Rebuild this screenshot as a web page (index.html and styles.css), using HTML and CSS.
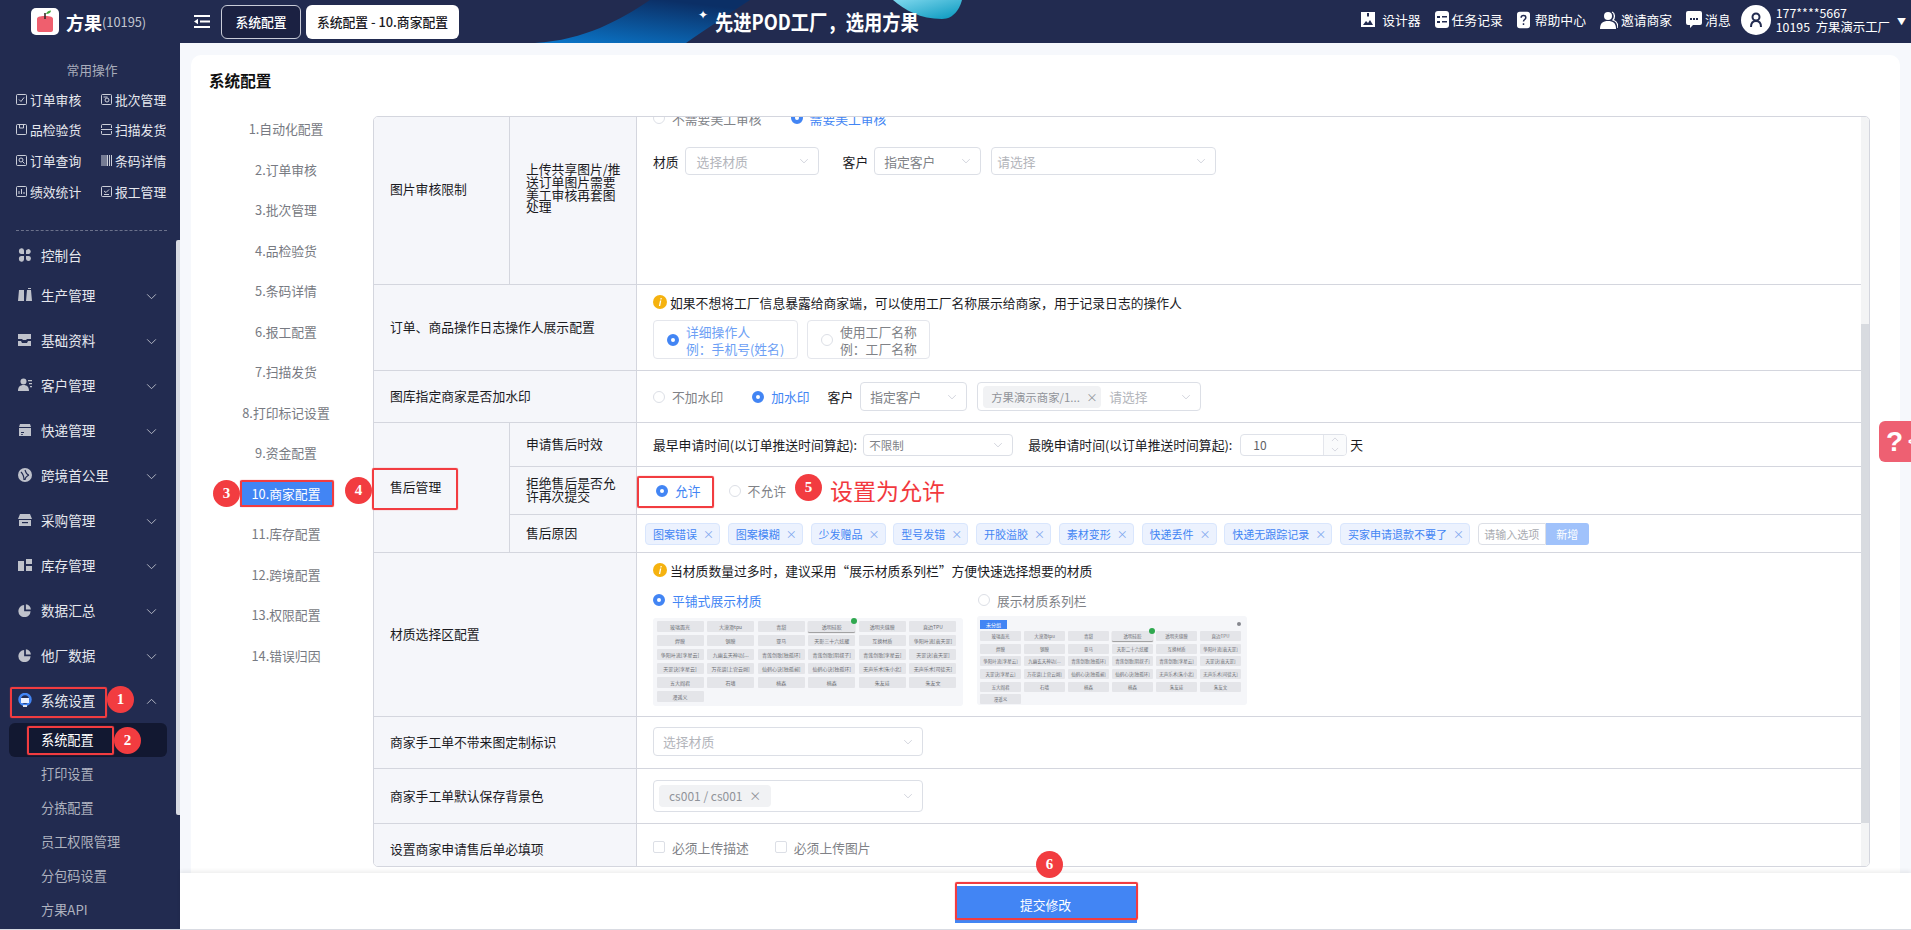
FILE: index.html
```html
<!DOCTYPE html>
<html lang="zh-CN">
<head>
<meta charset="utf-8">
<title>系统配置</title>
<link rel="stylesheet" href="styles.css">
</head>
<body>
<svg class="defs" width="0" height="0" aria-hidden="true">
  <symbol id="chev" viewBox="0 0 12 8"><path d="M1 1.5 6 6.5 11 1.5" fill="none" stroke="currentColor" stroke-width="1"/></symbol>
  <symbol id="warn" viewBox="0 0 14 14"><circle cx="7" cy="7" r="7" fill="#f5b20f"/><path d="M7.6 3h1.2l-.3 1.4H7.3zM7 5.6h1.3L7.2 11H5.9z" fill="#fff"/></symbol>
  <symbol id="pie" viewBox="0 0 16 16"><path d="M7 2.2v7.2h7.4A7 7 0 1 1 7 2.2z" fill="currentColor"/><path d="M9 1.5a6 6 0 0 1 5.7 6H9z" fill="currentColor"/></symbol>
</svg>
<header class="topbar">
  <div class="brand">
    <svg class="logo" viewBox="0 0 28 27"><rect width="28" height="27" rx="5" fill="#fff"/><path d="M6 11c0-2 2-3 8-3s8 1 8 3v11c0 1-1 2-2 2H8c-1 0-2-1-2-2z" fill="#ef5f6e"/><path d="M14 5v6" stroke="#3a2a2a" stroke-width="1.6"/><path d="M15 6c1-3 3-3.500 5-3.500 0 2-2 3.500-5 3.500z" fill="#42a83e"/></svg>
    <span class="brand-name">方果</span><span class="brand-id">(10195)</span>
  </div>
  <div class="topnav">
    <svg class="burger" viewBox="0 0 16 13"><path d="M0 1h16M6 6.500h10M0 12h16" stroke="#fff" stroke-width="2"/><path d="M4 3.800v5.400L0 6.500z" fill="#fff"/></svg>
    <div class="tab tab-dark">系统配置</div>
    <div class="tab tab-light">系统配置 - 10.商家配置</div>
  </div>
  <div class="banner">
    <svg class="banner-art" viewBox="0 0 500 43" preserveAspectRatio="none">
      <defs>
        <linearGradient id="sw" x1="0" y1="1" x2="0.6" y2="0"><stop offset="0" stop-color="#0a78cc"/><stop offset="1" stop-color="#0b2f66"/></linearGradient>
        <linearGradient id="cy" x1="0" y1="0" x2="1" y2="1"><stop offset="0" stop-color="#7fd8ee"/><stop offset="1" stop-color="#0596bd"/></linearGradient>
      </defs>
      <path d="M35 43C85 40 120 20 150 0H250C225 16 205 30 186 43z" fill="url(#sw)"/>
      <path d="M393 0C405 10 420 19 442 19 454 19 460 8 462 0z" fill="url(#cy)"/>
    </svg>
    <span class="star">✦</span><span class="slogan">先进POD工厂&#65292;选用方果</span>
  </div>
  <div class="tools">
    <div class="tool t1"><svg viewBox="0 0 14 15"><path d="M0 0h14v15H0z" fill="#fff"/><path d="M2 13l3-4 2 2 2-3 3 5zM6 1h2v4L7 4 6 5z" fill="#222b50"/></svg><span>设计器</span></div>
    <div class="tool t2"><svg viewBox="0 0 14 17"><rect width="14" height="17" rx="3" fill="#fff"/><path d="M2 5h3v2H2zM7 5h5v1.500H7zM2 10h3v2H2zM7 10h5v1.500H7z" fill="#222b50"/></svg><span>任务记录</span></div>
    <div class="tool t3"><svg viewBox="0 0 14 18"><rect width="14" height="18" rx="3" fill="#fff"/><path d="M4.500 6.500c0-3 5-3 5 0 0 2-2.500 2-2.500 4M7 12.500v2" fill="none" stroke="#222b50" stroke-width="1.600"/></svg><span>帮助中心</span></div>
    <div class="tool t4"><svg viewBox="0 0 18 18"><circle cx="8" cy="5" r="4" fill="#fff"/><path d="M0 18c0-6 3-8 8-8s8 2 8 8z" fill="#fff"/><path d="M12 1c3 1 3 6 1 8 3 1 5 4 5 8" fill="none" stroke="#fff" stroke-width="1.300"/></svg><span>邀请商家</span></div>
    <div class="tool t5"><svg viewBox="0 0 16 17"><path d="M2 0h12a2 2 0 0 1 2 2v10a2 2 0 0 1-2 2H7l-3 3v-3H2a2 2 0 0 1-2-2V2a2 2 0 0 1 2-2z" fill="#fff"/><path d="M4 7h2v2H4zM7 7h2v2H7zM10 7h2v2h-2z" fill="#222b50"/></svg><span>消息</span></div>
    <svg class="avatar" viewBox="0 0 30 30"><circle cx="15" cy="15" r="15" fill="#fff"/><circle cx="15" cy="12" r="3.500" fill="none" stroke="#222b50" stroke-width="2"/><path d="M10 22c0-4 2-6 5-6s5 2 5 6" fill="none" stroke="#222b50" stroke-width="2"/></svg>
    <div class="user"><div>177****5667</div><div>10195&nbsp; 方果演示工厂</div></div>
    <span class="caret">▼</span>
  </div>
</header>

<div class="shell">
  <aside class="sidebar">
    <div class="quick-title">常用操作</div>
    <div class="quick">
      <div class="qk"><svg viewBox="0 0 11 11"><rect x=".5" y=".5" width="10" height="10" rx="1"/><path d="M3 5.500l2 2 3-4"/></svg>订单审核</div>
      <div class="qk"><svg viewBox="0 0 11 11"><rect x=".5" y=".5" width="10" height="10" rx="1"/><circle cx="6" cy="6" r="2"/><path d="M2.500 3h4"/></svg>批次管理</div>
      <div class="qk"><svg viewBox="0 0 11 11"><rect x=".5" y=".5" width="10" height="10" rx="1"/><path d="M3.500 1v3h4V1"/></svg>品检验货</div>
      <div class="qk"><svg viewBox="0 0 11 11"><path d="M.5 4V1.500a1 1 0 0 1 1-1h8a1 1 0 0 1 1 1V4M.5 7v2.500a1 1 0 0 0 1 1h8a1 1 0 0 0 1-1V7M0 5.500h11"/></svg>扫描发货</div>
      <div class="qk"><svg viewBox="0 0 11 11"><rect x=".5" y=".5" width="10" height="10" rx="1"/><circle cx="5" cy="5" r="2"/><path d="M6.500 6.500l2 2"/></svg>订单查询</div>
      <div class="qk"><svg viewBox="0 0 11 11"><path d="M1 0v11M3 0v11M5 0v11M6.500 0v11M8.500 0v11M10.500 0v11"/></svg>条码详情</div>
      <div class="qk"><svg viewBox="0 0 11 11"><rect x=".5" y=".5" width="10" height="10" rx="1"/><path d="M3 8V5M5.500 8V3M8 8V6"/></svg>绩效统计</div>
      <div class="qk"><svg viewBox="0 0 11 11"><rect x=".5" y=".5" width="10" height="10" rx="1"/><path d="M3 5l2 1.500 3-3M3 8.500h5"/></svg>报工管理</div>
    </div>
    <div class="divider"></div>
    <nav class="menu">
      <div class="mi mi-first"><svg class="mic" viewBox="0 0 14 14"><path d="M1 3a2.500 2.500 0 0 1 5-.5V6H3A2.500 2.500 0 0 1 1 3zM8 2.500A2.500 2.500 0 1 1 11 6H8zM1 11a2.500 2.500 0 0 1 2-3h3v3.500A2.500 2.500 0 0 1 1 11zM8 8h3a2.500 2.500 0 1 1-3 3z" fill="currentColor"/></svg><span>控制台</span></div>
      <div class="mi"><svg class="mic" viewBox="0 0 14 14"><path d="M1 2h5v11H0zM8 13l1-11h4l1 11zM10 0h3v1h-3z" fill="currentColor"/></svg><span>生产管理</span><svg class="chev"><use href="#chev"/></svg></div>
      <div class="mi"><svg class="mic" viewBox="0 0 14 14"><path d="M0 1h13v5H9l-1 1H5L4 6H0zM0 8h3l1 2h5l1-2h3v5H0z" fill="currentColor"/></svg><span>基础资料</span><svg class="chev"><use href="#chev"/></svg></div>
      <div class="mi"><svg class="mic" viewBox="0 0 14 14"><circle cx="5.500" cy="3.500" r="3" fill="currentColor"/><path d="M0 13c0-4 2-6 5.500-6S11 9 11 13zM10 2h4v1.200h-4zM11 5h3v1.200h-3zM12 8h2v1.200h-2z" fill="currentColor"/></svg><span>客户管理</span><svg class="chev"><use href="#chev"/></svg></div>
      <div class="mi"><svg class="mic" viewBox="0 0 14 14"><path d="M2 1h10l1 3H1zM1 5h12v8H1z" fill="currentColor"/><path d="M3 9h3v1H3zM3 11h2v.800H3z" fill="#222b50"/></svg><span>快递管理</span><svg class="chev"><use href="#chev"/></svg></div>
      <div class="mi"><svg class="mic" viewBox="0 0 14 14"><circle cx="7" cy="7" r="7" fill="currentColor"/><path d="M3 4c2 2 3 4 3 8M7 2c1 3 2 5 4 5M7 12c0-3 2-4 4-5" fill="none" stroke="#222b50" stroke-width="1.200"/></svg><span>跨境首公里</span><svg class="chev"><use href="#chev"/></svg></div>
      <div class="mi"><svg class="mic" viewBox="0 0 14 14"><path d="M2 1h10l2 5H0zM1 7h12v6H1z" fill="currentColor"/><path d="M4 9h6v1.200H4z" fill="#222b50"/></svg><span>采购管理</span><svg class="chev"><use href="#chev"/></svg></div>
      <div class="mi"><svg class="mic" viewBox="0 0 14 14"><path d="M0 3h6v10H0zM8 1h6v5H8zM8 8h6v5H8z" fill="currentColor"/></svg><span>库存管理</span><svg class="chev"><use href="#chev"/></svg></div>
      <div class="mi"><svg class="mic"><use href="#pie"/></svg><span>数据汇总</span><svg class="chev"><use href="#chev"/></svg></div>
      <div class="mi"><svg class="mic"><use href="#pie"/></svg><span>他厂数据</span><svg class="chev"><use href="#chev"/></svg></div>
      <div class="mi mi-open"><svg class="mic" viewBox="0 0 14 14"><circle cx="7" cy="6.500" r="5.500" fill="none" stroke="#4285f4" stroke-width="2.500"/><path d="M3 5h8v5H3z" fill="#eaf0ff"/><path d="M5 12h4v2H5z" fill="#dfe3ee"/></svg><span>系统设置</span><svg class="chev chev-up"><use href="#chev"/></svg></div>
      <div class="sub">
        <div class="si si-active">系统配置</div>
        <div class="si">打印设置</div>
        <div class="si">分拣配置</div>
        <div class="si">员工权限管理</div>
        <div class="si">分包码设置</div>
        <div class="si">方果API</div>
      </div>
    </nav>
  </aside>

  <main class="main">
    <section class="card">
      <h1 class="card-title">系统配置</h1>
      <div class="card-body">
        <ul class="anchors">
          <li>1.自动化配置</li><li>2.订单审核</li><li>3.批次管理</li><li>4.品检验货</li><li>5.条码详情</li><li>6.报工配置</li><li>7.扫描发货</li><li>8.打印标记设置</li><li>9.资金配置</li><li class="anchor-on">10.商家配置</li><li>11.库存配置</li><li>12.跨境配置</li><li>13.权限配置</li><li>14.错误归因</li>
        </ul>
        <div class="table-wrap">
          <div class="table-view">
            <div class="table">
              <div class="lab">图片审核限制</div>
              <div class="lab lab-tight">上传共享图片/推<br>送订单图片需要<br>美工审核再套图<br>处理</div>
              <div class="val val-col val-r1">
                <div class="line">
                  <span class="opt"><i class="radio"></i>不需要美工审核</span>
                  <span class="opt opt-on"><i class="radio radio-on"></i>需要美工审核</span>
                </div>
                <div class="line line-r1">
                  <span class="key">材质</span>
                  <div class="select w134 ph">选择材质<svg class="chev"><use href="#chev"/></svg></div>
                  <span class="key key-gap">客户</span>
                  <div class="select w107">指定客户<svg class="chev"><use href="#chev"/></svg></div>
                  <div class="select w225 ph">请选择<svg class="chev"><use href="#chev"/></svg></div>
                </div>
              </div>

              <div class="lab span2">订单&#12289;商品操作日志操作人展示配置</div>
              <div class="val val-col val-r2">
                <div class="notice"><svg class="warn"><use href="#warn"/></svg>如果不想将工厂信息暴露给商家端&#65292;可以使用工厂名称展示给商家&#65292;用于记录日志的操作人</div>
                <div class="rcards">
                  <div class="rcard rcard-on"><i class="radio radio-on"></i><div>详细操作人<br>例&#65306;手机号(姓名)</div></div>
                  <div class="rcard"><i class="radio"></i><div>使用工厂名称<br>例&#65306;工厂名称</div></div>
                </div>
              </div>

              <div class="lab span2">图库指定商家是否加水印</div>
              <div class="val line">
                <span class="opt"><i class="radio"></i>不加水印</span>
                <span class="opt opt-on"><i class="radio radio-on"></i>加水印</span>
                <span class="key key-r3">客户</span>
                <div class="select w107 s29">指定客户<svg class="chev"><use href="#chev"/></svg></div>
                <div class="select w224 s29 select-tags"><span class="chip chip-sm">方果演示商家/1... <b>×</b></span><span class="ph">请选择</span><svg class="chev"><use href="#chev"/></svg></div>
              </div>

              <div class="lab span-rows">售后管理</div>
              <div class="lab">申请售后时效</div>
              <div class="val line">
                <span>最早申请时间(以订单推送时间算起):</span>
                <div class="select w150 s22 sm">不限制<svg class="chev"><use href="#chev"/></svg></div>
                <span class="m15">最晚申请时间(以订单推送时间算起):</span>
                <div class="number"><span>10</span><div class="steps"><svg class="chev chev-up"><use href="#chev"/></svg><svg class="chev"><use href="#chev"/></svg></div></div>
                <span class="unit">天</span>
              </div>
              <div class="lab lab-tight">拒绝售后是否允<br>许再次提交</div>
              <div class="val line val-allow">
                <span class="opt opt-on"><i class="radio radio-on"></i>允许</span>
                <span class="opt"><i class="radio"></i>不允许</span>
              </div>
              <div class="lab">售后原因</div>
              <div class="val line val-tags">
                <span class="tag">图案错误<b>×</b></span>
                <span class="tag">图案模糊<b>×</b></span>
                <span class="tag">少发赠品<b>×</b></span>
                <span class="tag">型号发错<b>×</b></span>
                <span class="tag">开胶溢胶<b>×</b></span>
                <span class="tag">素材变形<b>×</b></span>
                <span class="tag">快递丢件<b>×</b></span>
                <span class="tag">快递无跟踪记录<b>×</b></span>
                <span class="tag">买家申请退款不要了<b>×</b></span>
                <div class="add"><span class="add-input">请输入选项</span><span class="add-btn">新增</span></div>
              </div>

              <div class="lab span2">材质选择区配置</div>
              <div class="val val-col val-r5">
                <div class="notice"><svg class="warn"><use href="#warn"/></svg>当材质数量过多时&#65292;建议采用&#8220;展示材质系列栏&#8221;方便快速选择想要的材质</div>
                <div class="mats">
                  <div class="mat-a">
                    <span class="opt opt-on"><i class="radio radio-on"></i>平铺式展示材质</span>
                    <div class="pic pic-a">
                      <span>玻璃面光</span><span>大漠滑tpu</span><span>青甜</span><span class="picked">透明硅胶</span><span>透明夹缝膜</span><span>直边TPU</span>
                      <span>焊膜</span><span>钢膜</span><span>亚马</span><span>天影三十六炫耀</span><span>互换材质</span><span>争阳叶流[袁天罡]</span>
                      <span>争阳叶流[李星云]</span><span>九幽玄天神功[...</span><span>青莲剑歌[独孤环]</span><span>青莲剑歌[阴叔子]</span><span>青莲剑歌[李星云]</span><span>天罡诀[袁天罡]</span>
                      <span>天罡诀[李星云]</span><span>万花谱[上官云阙]</span><span>仙鹤心诀[独孤昶]</span><span>仙鹤心诀[独孤环]</span><span>无声乐术[朱小北]</span><span>无声乐术[司徒天]</span>
                      <span>五大阎君</span><span>石墙</span><span>楠森</span><span>楠森</span><span>朱友珪</span><span>朱友文</span>
                      <span>漫遥义</span>
                    </div>
                  </div>
                  <div class="mat-b">
                    <span class="opt opt-b"><i class="radio"></i>展示材质系列栏</span>
                    <div class="pic-b">
                      <div class="pic-head"><em>未分组</em><i class="gear"></i></div>
                      <div class="pic pic-c">
                        <span>玻璃面光</span><span>大漠滑tpu</span><span>青甜</span><span class="picked">透明硅胶</span><span>透明夹缝膜</span><span>直边TPU</span>
                        <span>焊膜</span><span>钢膜</span><span>亚马</span><span>天影二十六炫耀</span><span>互换材质</span><span>争阳叶流[袁天罡]</span>
                        <span>争阳叶流[李星云]</span><span>九幽玄天神功[...</span><span>青莲剑歌[独孤环]</span><span>青莲剑歌[阴叔子]</span><span>青莲剑歌[李星云]</span><span>天罡诀[袁天罡]</span>
                        <span>天罡诀[李星云]</span><span>万花谱[上官云阙]</span><span>仙鹤心诀[独孤昶]</span><span>仙鹤心诀[独孤环]</span><span>无声乐术[朱小北]</span><span>无声乐术[司徒天]</span>
                        <span>五大阎君</span><span>石墙</span><span>楠森</span><span>楠森</span><span>朱友珪</span><span>朱友文</span>
                        <span>漫遥义</span>
                      </div>
                    </div>
                  </div>
                </div>
              </div>

              <div class="lab span2">商家手工单不带来图定制标识</div>
              <div class="val line val-nudge">
                <div class="select w270 s29 ph">选择材质<svg class="chev"><use href="#chev"/></svg></div>
              </div>

              <div class="lab span2">商家手工单默认保存背景色</div>
              <div class="val line">
                <div class="select w270 s32 select-tags"><span class="chip">cs001 / cs001 <b>×</b></span><svg class="chev"><use href="#chev"/></svg></div>
              </div>

              <div class="lab span2">设置商家申请售后单必填项</div>
              <div class="val line val-checks">
                <span class="opt"><i class="check"></i>必须上传描述</span>
                <span class="opt"><i class="check"></i>必须上传图片</span>
              </div>
            </div>
          </div>
          <div class="vscroll"></div>
        </div>
      </div>
    </section>
    <footer class="footer"><button class="submit">提交修改</button></footer>
  </main>
</div>

<div class="help"><span>?</span><span class="help-arrow">&lt;</span></div>
<div class="side-thumb"></div>

<div class="mark m-r1"></div><div class="num n1">1</div>
<div class="mark m-r2"></div><div class="num n2">2</div>
<div class="mark m-r3"></div><div class="num n3">3</div>
<div class="mark m-r4"></div><div class="num n4">4</div>
<div class="mark m-r5"></div><div class="num n5">5</div>
<div class="note">设置为允许</div>
<div class="mark m-r6"></div><div class="num n6">6</div>
</body>
</html>
```
FILE: styles.css
```css
* { box-sizing: border-box; }
html, body { margin: 0; padding: 0; }
body {
  position: relative;
  width: 1911px;
  height: 930px;
  overflow: hidden;
  background: #f6f8fc;
  font-family: "Noto Sans CJK SC", "Noto Sans", sans-serif;
  font-size: 12.8px;
  color: #1b1b1f;
}
.defs { position: absolute; }
i, em { font-style: normal; }
b { font-weight: 400; }

/* top bar */
.topbar { display: flex; height: 43px; background: #222b50; color: #fff; }
.brand { width: 180px; display: flex; align-items: center; padding-left: 31px; flex: none; }
.logo { width: 28px; height: 27px; margin-right: 7px; }
.brand-name { font-size: 18px; font-weight: 700; line-height: 1; }
.brand-id { font-size: 12.8px; color: #c4c7d2; }
.topnav { display: flex; align-items: center; padding-left: 14px; flex: none; }
.burger { width: 16px; height: 13px; margin-right: 11px; }
.tab { height: 34px; line-height: 32px; border-radius: 6px; padding: 0; text-align: center; font-size: 12.8px; }
.tab-dark { width: 80px; background: #1b2142; border: 1px solid #c9ccd8; margin-right: 5px; font-weight: 500; }
.tab-light { width: 153px; background: #fff; color: #1b1b1f; font-weight: 500; line-height: 34px; }
.banner { position: absolute; left: 500px; top: 0; width: 500px; height: 43px; overflow: hidden; }
.banner-art { position: absolute; left: 0; top: 0; width: 500px; height: 43px; }
.star { position: absolute; left: 198px; top: 6px; font-size: 12px; line-height: 16px; color: #fff; }
.slogan {
  position: absolute; left: 215px; top: 6px;
  font-size: 21px; line-height: 30px; font-weight: 700; color: #fff; white-space: nowrap;
  transform: scaleX(.87); transform-origin: 0 50%;
}
.tools { margin-left: auto; display: flex; align-items: center; padding: 0 5px 4px 0; position: relative; font-size: 12.8px; }
.tool { display: flex; align-items: center; white-space: nowrap; margin-right: 14px; }
.tool svg { display: block; margin-right: 3px; }
.t1 svg { width: 14px; height: 15px; margin-right: 7px; }
.t2 svg { width: 14px; height: 17px; }
.t3 svg { width: 13px; height: 18px; margin-right: 5px; }
.t4 svg { width: 18px; height: 18px; }
.t5 { margin-right: 10px; }
.t5 svg { width: 16px; height: 17px; }
.avatar { width: 30px; height: 30px; margin-right: 5px; }
.user { line-height: 14px; font-size: 12.4px; white-space: nowrap; }
.caret { font-size: 9px; margin-left: 7px; position: relative; top: 2px; }

/* shell */
.shell { display: flex; height: 887px; }
.sidebar { width: 180px; flex: none; background: #222b50; color: #dfe1e8; overflow: hidden; padding-top: 12px; border-bottom: 1px solid #d9dbe2; }
.quick-title { height: 29px; line-height: 30px; text-align: center; font-size: 12.8px; color: #a9adbb; padding-left: 4px; }
.quick { display: grid; grid-template-columns: 85px 85px; grid-auto-rows: 30.67px; padding-left: 16px; }
.qk { display: flex; align-items: center; gap: 3px; color: #e6e8ee; white-space: nowrap; }
.qk svg { width: 11px; height: 11px; fill: none; stroke: #dfe1e8; stroke-width: .9; flex: none; }
.divider { margin: 23px 13px 0 16px; border-top: 1px dashed #6b718b; height: 7px; }
.menu { display: flex; flex-direction: column; gap: 9px; }
.mi { height: 36px; display: flex; align-items: center; padding-left: 18px; font-size: 13.6px; color: #e6e8ee; position: relative; }
.mi-first { margin-bottom: -5px; }
.mi-open { margin-bottom: -4px; }
.mic { width: 14px; height: 14px; margin-right: 9px; color: #bfc2cb; flex: none; }
.chev { width: 11px; height: 7px; color: #c3c6d0; flex: none; }
.mi .chev { position: absolute; left: 146px; top: 16px; }
.chev-up { transform: rotate(180deg); }
.sub { display: flex; flex-direction: column; }
.si { height: 34px; line-height: 34px; padding-left: 41px; color: #aeb2bf; font-size: 13.2px; }
.si-active { margin: 0 13px 0 9px; padding-left: 32px; background: #121831; border-radius: 6px; color: #fff; }
.side-thumb { position: absolute; left: 176px; top: 240px; width: 4px; height: 575px; background: #d8dbe3; border-radius: 2px 0 0 2px; }

/* main */
.main { flex: 1; display: flex; flex-direction: column; min-width: 0; }
.card { height: 818px; margin: 12px 11px 0; background: #fff; border-radius: 10px 10px 0 0; display: flex; flex-direction: column; flex: none; }
.card-title { margin: 0; height: 61px; padding: 13px 0 0 18px; font-size: 15.6px; line-height: 24px; font-weight: 700; color: #111; }
.card-body { display: flex; height: 751px; }
.anchors { list-style: none; margin: 0; padding: 0 0 0 8px; width: 182px; flex: none; display: flex; flex-direction: column; align-items: center; color: #777a82; gap: 14.5px; font-size: 12.8px; }
.anchors li { height: 26px; line-height: 26px; padding: 0 9px; white-space: nowrap; }
.anchors .anchor-on { background: #4285f4; color: #fff; padding: 0 12px; }
.table-wrap { width: 1497px; height: 751px; display: flex; border: 1px solid #d4d6de; border-radius: 5px; overflow: hidden; flex: none; }
.table-view { flex: 1; overflow: hidden; min-width: 0; }
.vscroll { width: 8px; flex: none; background: linear-gradient(#f3f4f5 0 207px, #d8dbe0 207px 706px, #f3f4f5 706px); }
.table {
  margin-top: -22px;
  display: grid;
  grid-template-columns: 136px 127px 1fr;
  grid-template-rows: 190px 86px 52px 44px 48px 38px 164px 52px 55px 52px;
}
.lab { background: #f5f6fa; border-right: 1px solid #d4d6de; border-bottom: 1px solid #d4d6de; display: flex; align-items: center; padding: 0 0 2px 16px; color: #1b1b1f; }
.lab-tight { line-height: 12.8px; }
.span2 { grid-column: span 2; }
.span-rows { grid-row: span 3; }
.val { border-bottom: 1px solid #d4d6de; padding-left: 16px; min-width: 0; }
.val-col { display: flex; flex-direction: column; }
.line { display: flex; align-items: center; }
.val-r1 { padding-top: 13px; }
.val-r1 > .line:first-child { height: 20px; }
.line-r1 { margin-top: 19px; }
.val-r2 { padding-top: 8px; }
.val-r5 { padding-top: 8px; }
.val-nudge { padding-bottom: 2px; }
.opt { display: inline-flex; align-items: center; gap: 7px; margin-right: 29px; color: #808287; white-space: nowrap; }
.opt-on { color: #4285f4; }
.radio { width: 12px; height: 12px; border-radius: 50%; border: 1px solid #dcdfe6; background: #fff; flex: none; }
.radio-on { border: 4px solid #4285f4; }
.check { width: 12px; height: 12px; border-radius: 2px; border: 1px solid #dcdfe6; background: #fff; flex: none; }
.key { margin-right: 6px; white-space: nowrap; }
.key-gap { margin-left: 24px; }
.key-r3 { margin-left: -11px; margin-right: 7px; }
.select { height: 28px; border: 1px solid #dcdfe6; border-radius: 4px; display: flex; align-items: center; justify-content: space-between; padding: 0 9px; color: #808287; margin-right: 10px; white-space: nowrap; flex: none; }
.select .chev { margin-left: auto; width: 10px; height: 6px; }
.ph { color: #b3b5bb; }
.w107 { width: 107px; }
.w134 { width: 134px; margin-right: 0; padding-left: 11px; }
.w150 { width: 150px; margin: 0; }
.w224 { width: 224px; }
.w225 { width: 225px; padding-left: 5px; }
.w270 { width: 270px; }
.s22 { height: 22px; } .s29 { height: 29px; } .s32 { height: 32px; }
.sm { font-size: 11.5px; padding: 0 9px 0 5px; margin-left: 6px; }
.select-tags { padding-left: 5px; gap: 8px; justify-content: flex-start; }
.chip { background: #f1f2f4; color: #909399; border-radius: 4px; height: 22px; line-height: 22px; padding: 0 10px; font-size: 12px; white-space: nowrap; }
.chip-sm { width: 118px; font-size: 11.4px; padding: 0 8px 0 8px; }
.chip b { margin-left: 4px; }
.m15 { margin-left: 15px; }
.number { width: 107px; height: 22px; margin-left: 8px; border: 1px solid #dfe2e9; border-radius: 4px; display: flex; justify-content: space-between; align-items: center; padding-left: 12px; color: #606266; font-size: 12px; overflow: hidden; flex: none; }
.steps { width: 23px; height: 20px; border-left: 1px solid #e4e6ec; display: flex; flex-direction: column; align-items: center; justify-content: space-around; background: #fafbfc; }
.steps .chev { width: 8px; height: 5px; }
.unit { margin-left: 3px; }
.val-allow { padding-left: 19px; }
.val-allow .opt { margin-right: 28px; }
.val-tags { gap: 7.75px; padding-left: 8px; }
.tag { height: 22px; line-height: 20px; background: #ecf2fe; border: 1px solid #d9e6fd; border-radius: 4px; color: #4285f4; padding: 0 7px; font-size: 11px; white-space: nowrap; }
.tag b { display: inline-block; width: 9px; margin-left: 6px; color: #7ea6ee; }
.add { display: flex; }
.add-input { width: 68px; height: 22px; line-height: 20px; border: 1px solid #dcdfe6; border-radius: 4px 0 0 4px; text-align: center; color: #a9abb1; font-size: 11px; white-space: nowrap; overflow: hidden; }
.add-btn { width: 43px; height: 22px; line-height: 22px; background: #a0c2fb; color: #fff; text-align: center; border-radius: 0 3px 3px 0; font-size: 11px; }
.notice { display: flex; align-items: center; gap: 3px; height: 18px; white-space: nowrap; }
.warn { width: 14px; height: 14px; flex: none; }
.rcards { display: flex; gap: 9px; margin-top: 9px; }
.rcard { height: 39px; border: 1px solid #e4e6ec; border-radius: 4px; display: flex; align-items: center; gap: 7px; padding: 0 12px 0 13px; color: #808287; line-height: 17px; white-space: nowrap; }
.rcard-on { color: #6d9ff5; width: 145px; }
.mats { display: flex; gap: 14px; margin-top: 11px; }
.mat-a { width: 310px; }
.mat-a .opt, .opt-b { height: 20px; margin: 0; }
.opt-b { margin-left: 1px; }
.pic { display: grid; font-size: 5px; color: #6d6f75; }
.pic span { background: #e4e5e9; border-radius: 1px; text-align: center; white-space: nowrap; overflow: hidden; position: relative; }
.pic-a { width: 310px; height: 88px; margin-top: 8px; background: #f5f6f9; border-radius: 3px; padding: 3px 3px 0 3.500px; grid-template-columns: repeat(6, 47px); grid-auto-rows: 11px; column-gap: 3.600px; row-gap: 3px; line-height: 11px; }
.pic .picked { overflow: visible; box-shadow: 0 1px 1px #999; }
.picked::after { content: ""; position: absolute; right: -2px; top: -3px; width: 6px; height: 6px; border-radius: 50%; background: #2fa84f; }
.pic-b { width: 270px; height: 89px; margin-top: 6px; background: #f5f6f9; border-radius: 3px; padding: 3px 3px 0; }
.pic-head { display: flex; justify-content: space-between; align-items: center; height: 10px; font-size: 5px; color: #fff; }
.pic-head em { width: 27px; height: 9px; line-height: 9px; background: #4285f4; text-align: center; }
.gear { width: 4px; height: 4px; border-radius: 50%; background: #85878e; margin-right: 3px; }
.pic-c { margin-top: 2px; grid-template-columns: repeat(6, 41px); grid-auto-rows: 10px; column-gap: 3px; row-gap: 2.700px; line-height: 10px; font-size: 4.500px; }
.val-checks { padding-bottom: 5px; }
.val-checks .opt { margin-right: 26px; }

/* footer */
.footer { height: 57px; flex: none; background: #fff; display: flex; justify-content: center; align-items: center; padding-top: 6px; box-shadow: 0 -2px 4px rgba(0,0,0,.07); position: relative; border-bottom: 1px solid #d9dbe2; }
.submit { width: 182px; height: 37px; border: 0; background: #4285f4; color: #fff; font: inherit; font-size: 12.8px; padding: 0; }

/* floating help tab */
.help { position: absolute; left: 1879px; top: 421px; width: 32px; height: 41px; background: #ee6072; border-radius: 6px 0 0 6px; color: #fff; font-family: "Liberation Sans", sans-serif; font-weight: 700; display: flex; align-items: center; padding-left: 7px; font-size: 28px; overflow: hidden; white-space: nowrap; }
.help-arrow { font-size: 16px; margin-left: 5px; }

/* tutorial annotations */
.mark { position: absolute; border: 2px solid #f23c40; border-radius: 2px; box-shadow: 0 0 1px #f23c40; }
.m-r1 { left: 10px; top: 687px; width: 97px; height: 31px; }
.m-r2 { left: 27px; top: 726px; width: 87px; height: 29px; }
.m-r3 { left: 240px; top: 480px; width: 94px; height: 27px; }
.m-r4 { left: 372px; top: 468px; width: 86px; height: 42px; }
.m-r5 { left: 637px; top: 476px; width: 77px; height: 32px; }
.m-r6 { left: 955px; top: 882px; width: 183px; height: 38px; }
.num { position: absolute; width: 27px; height: 27px; border-radius: 50%; background: #f23c40; color: #fff; text-align: center; line-height: 27px; font-family: "Liberation Serif", serif; font-weight: 700; font-size: 15px; }
.n1 { left: 107px; top: 686px; }
.n2 { left: 114px; top: 727px; }
.n3 { left: 213px; top: 480px; }
.n4 { left: 345px; top: 477px; }
.n5 { left: 795px; top: 474px; }
.n6 { left: 1036px; top: 851px; }
.note { position: absolute; left: 830px; top: 473px; font-size: 23px; line-height: 34px; color: #f2393e; white-space: nowrap; }
```
